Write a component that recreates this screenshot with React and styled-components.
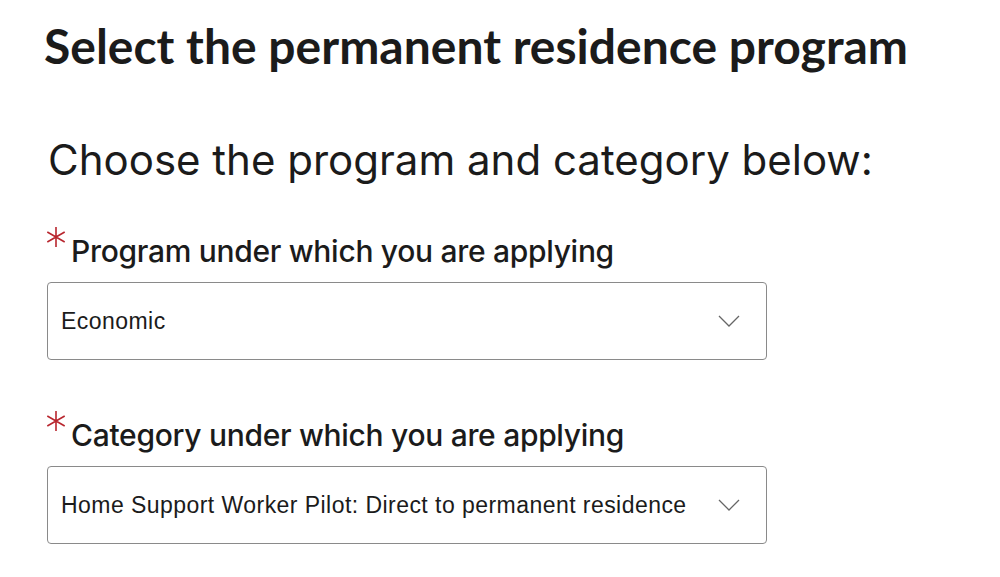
import React from 'react'
import styled, { createGlobalStyle } from 'styled-components'

const Global = createGlobalStyle`
  body {
    margin: 0;
    background: #fff;
    color: #1a1a1a;
  }
`;

const Page = styled.div`
  padding: 18px 0 0 44px;
`;

const Title = styled.h1`
  margin: 0;
  font-family: 'Lato', sans-serif;
  font-weight: 700;
  font-size: 48px;
  line-height: 56px;
  color: #1b1b1b;
`;

const Subtitle = styled.h2`
  margin: 61px 0 0 4px;
  font-family: 'Inter', sans-serif;
  font-weight: 400;
  font-size: 42px;
  line-height: 50px;
  color: #1b1b1b;
`;

const Field = styled.div`
  margin: ${p => p.$top}px 0 0 3px;
  width: 720px;
`;

const Label = styled.label`
  display: flex;
  align-items: flex-start;
  font-family: 'Inter', sans-serif;
  font-weight: 500;
  font-size: 30px;
  line-height: 36px;
  letter-spacing: -0.3px;
  color: #1b1b1b;
`;

const StarBox = styled.span`
  display: inline-flex;
  margin: -6px 5px 0 -1px;
`;

const Select = styled.div`
  margin-top: 13px;
  height: 78px;
  box-sizing: border-box;
  border: 1px solid #8a8a8a;
  border-radius: 4px;
  display: flex;
  align-items: center;
  justify-content: space-between;
  padding: 0 26px 0 13px;
  font-family: 'Liberation Sans', Arial, sans-serif;
  font-size: 23px;
  letter-spacing: 0.45px;
  color: #1b1b1b;
`;

const Star = () => (
  <StarBox>
    <svg width="20" height="20" viewBox="0 0 20 20" fill="none" stroke="#b8262e" strokeWidth="1.6">
      <path d="M10 0 V20 M1.3 5 L18.7 15 M1.3 15 L18.7 5" />
    </svg>
  </StarBox>
);

const Chevron = () => (
  <svg width="22" height="12" viewBox="0 0 22 12" fill="none">
    <path d="M1 1 L11 11 L21 1" stroke="#666" strokeWidth="1.3" />
  </svg>
);

export default function App() {
  return (
    <Page>
      <Global />
      <Title>Select the permanent residence program</Title>
      <Subtitle>Choose the program and category below:</Subtitle>
      <Field $top={48}>
        <Label><Star />Program under which you are applying</Label>
        <Select>Economic<Chevron /></Select>
      </Field>
      <Field $top={57}>
        <Label><Star />Category under which you are applying</Label>
        <Select>Home Support Worker Pilot: Direct to permanent residence<Chevron /></Select>
      </Field>
    </Page>
  );
}
